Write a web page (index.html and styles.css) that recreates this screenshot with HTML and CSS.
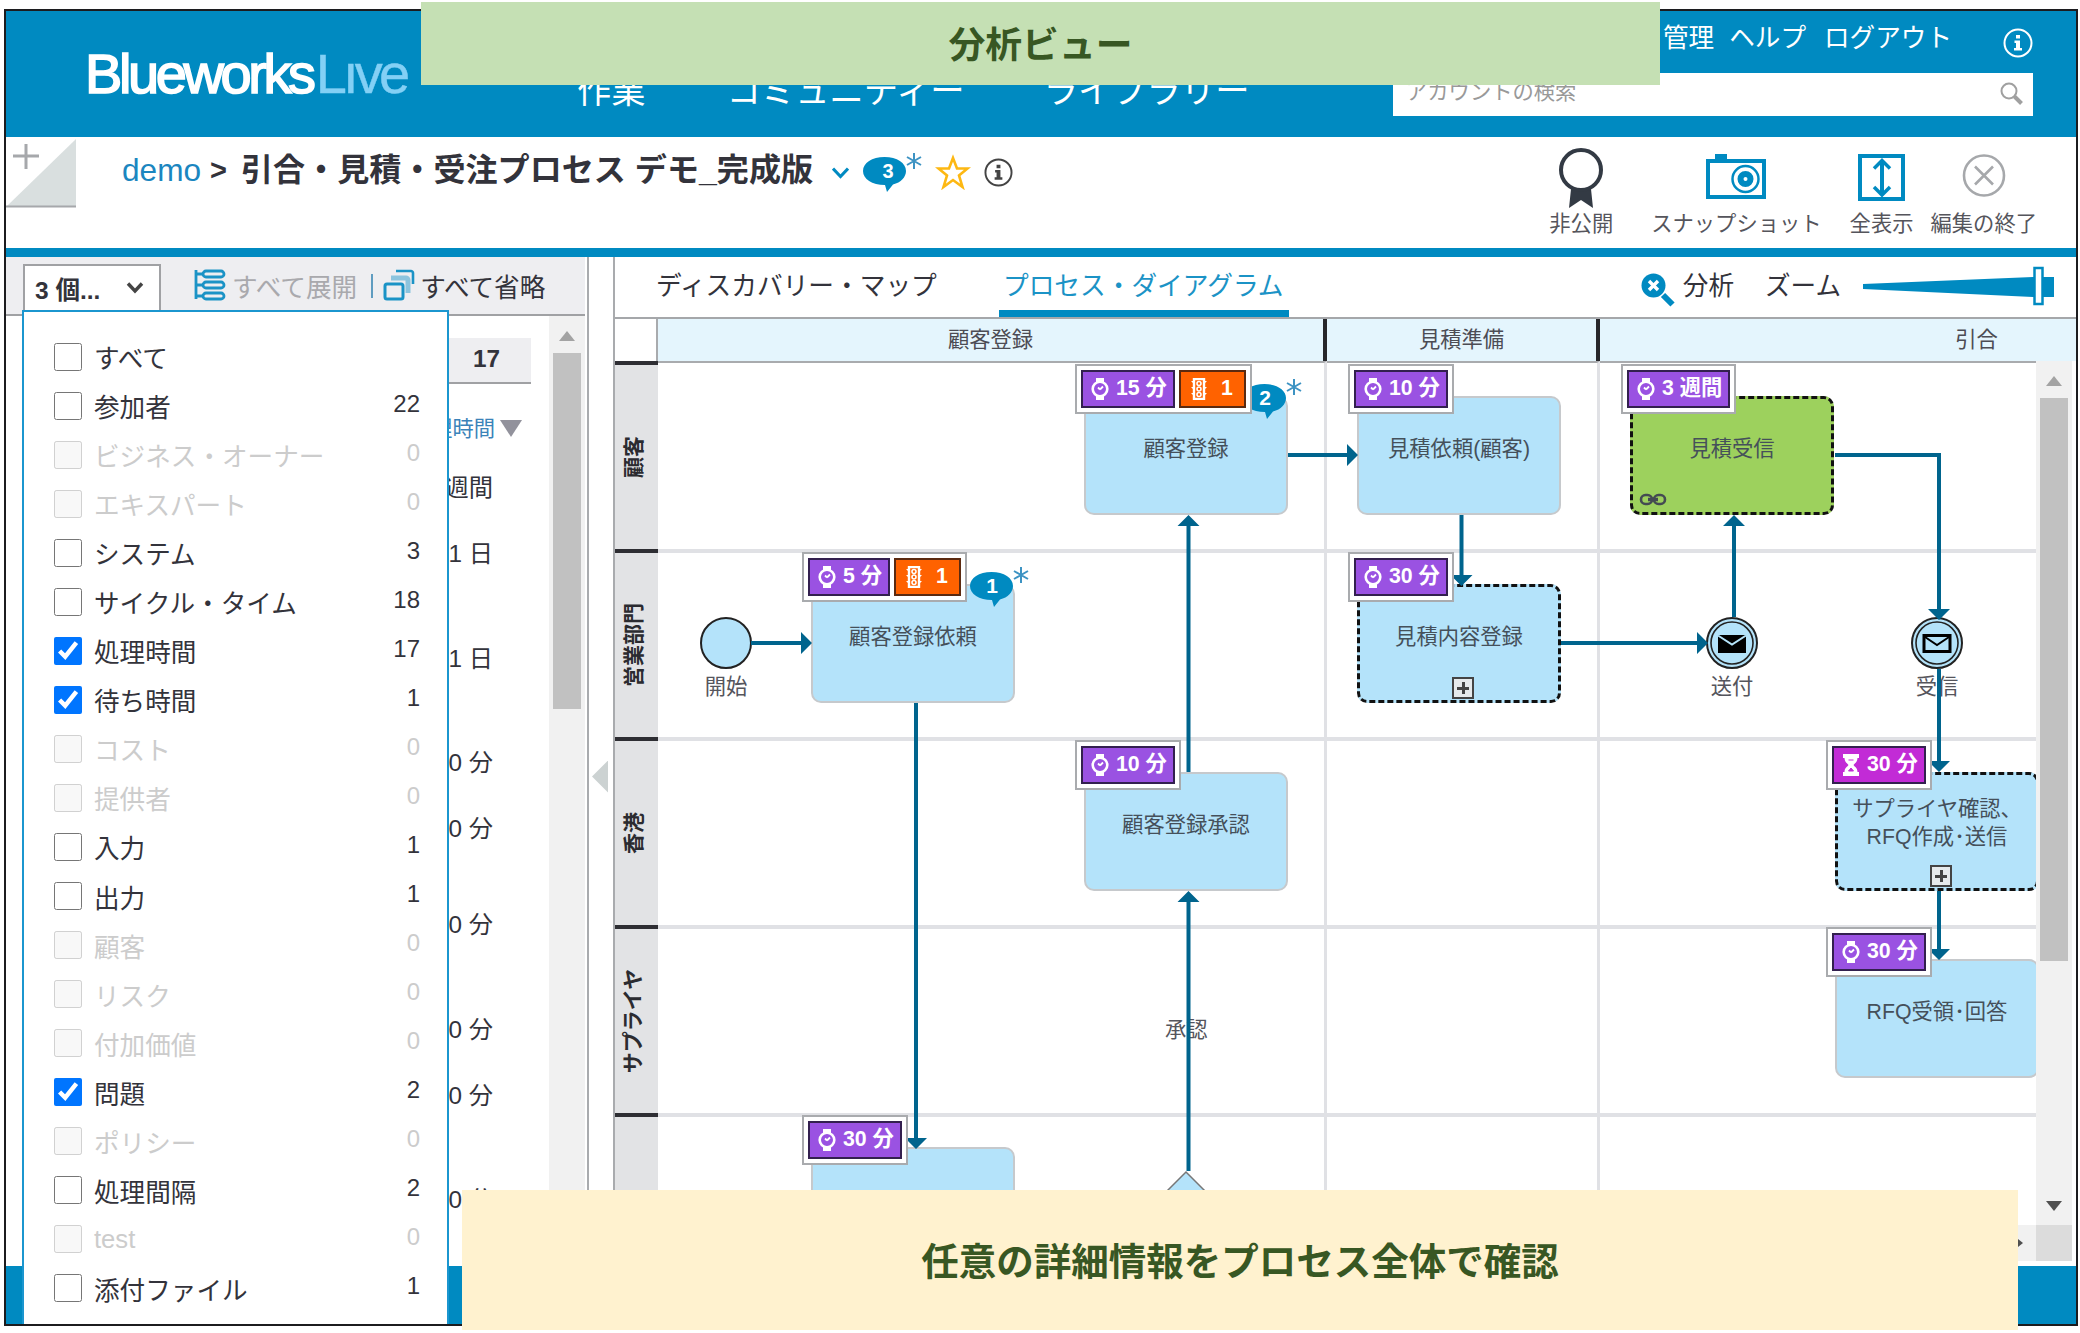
FILE: index.html
```html
<!DOCTYPE html>
<html lang="ja">
<head>
    <meta charset="UTF-8">
    <title>Blueworks Live</title>
    <link rel="stylesheet" href="styles.css">
</head>
<body>
    <!-- shared icons -->
    <svg class="defs" width="0" height="0">
        <symbol id="i-watch" viewBox="0 0 18 22">
            <path d="M5 0h8v4H5zM5 18h8v4H5z" fill="#fff"/>
            <circle cx="9" cy="11" r="7.300" fill="none" stroke="#fff" stroke-width="2.600"/>
            <path d="M9 11.500l3-3M7 9.500l2 2" stroke="#fff" stroke-width="1.800" fill="none"/>
        </symbol>
        <symbol id="i-glass" viewBox="0 0 18 22">
            <path d="M1 0h16v4h-1.500c0 4-2.500 5-4 7 1.500 2 4 3 4 7H17v4H1v-4h1.500c0-4 2.500-5 4-7-1.500-2-4-3-4-7H1z" fill="#fff"/>
            <path d="M6.500 6h5M9 14l2.500 3h-5z" stroke="#c22bd6" stroke-width="1" fill="#c22bd6"/>
        </symbol>
        <symbol id="i-light" viewBox="0 0 18 22">
            <path d="M4 1h10v20H4z" fill="none" stroke="#fff" stroke-width="2.400"/>
            <path d="M1 3h3v3zM1 9h3v3zM1 15h3v3zM17 3h-3v3zM17 9h-3v3zM17 15h-3v3z" fill="#fff"/>
            <circle cx="9" cy="5.500" r="2" fill="none" stroke="#fff" stroke-width="1.600"/>
            <circle cx="9" cy="11" r="2" fill="none" stroke="#fff" stroke-width="1.600"/>
            <circle cx="9" cy="16.500" r="2" fill="none" stroke="#fff" stroke-width="1.600"/>
        </symbol>
        <symbol id="i-bubble" viewBox="0 0 43 35">
            <path d="M21.500 0C34 0 43 6 43 14c0 6-5 11.500-13 13.500L24 35l-2-7C9 28 0 22 0 14S9 0 21.500 0z" fill="#008ac1"/>
        </symbol>
        <symbol id="i-star8" viewBox="0 0 16 16">
            <path d="M8 0v16M1 4l14 8M15 4L1 12" stroke="#3d93c3" stroke-width="2" fill="none"/>
        </symbol>
        <symbol id="i-info" viewBox="0 0 30 30">
            <circle cx="15" cy="15" r="13.500" fill="none" stroke="currentColor" stroke-width="2"/>
            <path d="M13 7h4v3.500h-4zM11.500 12.500H17V20h2v2.500h-8V20h2v-5h-1.500z" fill="currentColor"/>
        </symbol>
    </svg>

    <div class="window">
        <header class="header">
            <div class="logo"><span class="logo-main">Blueworks</span><span class="logo-live">Lıve</span></div>
            <nav class="nav">
                <a>作業</a>
                <a>コミュニティー</a>
                <a>ライブラリー</a>
            </nav>
            <div class="account">
                <div class="links">
                    <a>管理</a><a>ヘルプ</a><a>ログアウト</a>
                    <svg class="info" width="30" height="30"><use href="#i-info"/></svg>
                </div>
                <div class="search">
                    <span>アカウントの検索</span>
                    <svg width="24" height="24" viewBox="0 0 24 24" fill="none" stroke="#a0a0a0">
                        <circle cx="9" cy="9" r="7.500" stroke-width="2"/>
                        <path d="M14.500 14.500l7 7" stroke-width="4"/>
                    </svg>
                </div>
            </div>
        </header>

        <div class="titlebar">
            <svg class="corner" width="70" height="71" viewBox="0 0 70 71">
                <path d="M70 2v67H1z" fill="#d9dfdf"/>
                <path d="M0 69.500h70" stroke="#a6a8ab" stroke-width="2"/>
                <path d="M7 19h26M20 7v25" stroke="#a6a8ab" stroke-width="3"/>
            </svg>
            <div class="crumbs">
                <a class="space">demo</a>
                <b>&gt;</b>
                <h1>引合・見積・受注プロセス デモ_完成版</h1>
                <svg class="chev" width="17" height="12" viewBox="0 0 17 12"><path d="M1 1.500l7.500 8 7.500-8" fill="none" stroke="#008ac1" stroke-width="3"/></svg>
                <span class="bubble bubble-title"><svg width="43" height="35"><use href="#i-bubble"/></svg><b>3</b></span>
                <svg class="new" width="16" height="16"><use href="#i-star8"/></svg>
                <svg class="fav" width="36" height="36" viewBox="0 0 36 36"><path d="M18 4l4 10.500h10.500l-8.500 7 3.500 11.500-9.500-7-9.500 7L12 21.500l-8.500-7H14z" fill="none" stroke="#fdb813" stroke-width="2.600"/></svg>
                <svg class="dark" width="29" height="29"><use href="#i-info"/></svg>
            </div>
            <div class="actions">
                <div class="action">
                    <svg width="46" height="62" viewBox="0 0 46 62">
                        <path d="M13 42h20l2 19-12-8-12 8z" fill="#333a44"/>
                        <circle cx="23" cy="23" r="20" fill="#fff" stroke="#333a44" stroke-width="4"/>
                    </svg>
                    <span>非公開</span>
                </div>
                <div class="action snapshot">
                    <svg width="60" height="62" viewBox="0 0 60 62">
                        <path d="M9 12V7h12v5" fill="#008ac1"/>
                        <path d="M2 14h56v36H2z" fill="none" stroke="#008ac1" stroke-width="4"/>
                        <circle cx="39.500" cy="32" r="13" fill="none" stroke="#008ac1" stroke-width="2.500"/>
                        <circle cx="39.500" cy="32" r="5" fill="none" stroke="#008ac1" stroke-width="6"/>
                    </svg>
                    <span>スナップショット</span>
                </div>
                <div class="action full">
                    <svg width="48" height="62" viewBox="0 0 48 62" fill="none" stroke="#008ac1">
                        <path d="M2 9h43v43H2z" stroke-width="4"/>
                        <path d="M24 14v34" stroke-width="4"/>
                        <path d="M16 21.500l8-8 8 8M16 40l8 8 8-8" stroke-width="3.500"/>
                    </svg>
                    <span>全表示</span>
                </div>
                <div class="action close">
                    <svg width="44" height="62" viewBox="0 0 44 62" fill="none" stroke="#a6a8ab">
                        <circle cx="22" cy="28.500" r="20" stroke-width="2.600"/>
                        <path d="M13 19.500l18 18M31 19.500l-18 18" stroke-width="2.600"/>
                    </svg>
                    <span>編集の終了</span>
                </div>
            </div>
        </div>

        <main class="workspace">
            <section class="side">
                <div class="side-tools">
                    <div class="select">3 個...<svg width="18" height="12" viewBox="0 0 18 12"><path d="M2 1.500l7 7.500 7-7.500" fill="none" stroke="#444" stroke-width="3.400"/></svg></div>
                    <svg class="tree" width="32" height="32" viewBox="0 0 32 32" fill="none" stroke="#1b93c6" stroke-width="2.800">
                        <path d="M2 1v29M2 5h7M2 16h7M2 27h7"/>
                        <rect x="9" y="2" width="21" height="6" rx="3"/><rect x="9" y="13" width="21" height="6" rx="3"/><rect x="9" y="24" width="21" height="6" rx="3"/>
                    </svg>
                    <span class="expand">すべて展開</span>
                    <i class="sep"></i>
                    <svg class="stack" width="32" height="32" viewBox="0 0 32 32" fill="none" stroke="#1b93c6">
                        <rect x="2" y="15" width="18" height="15" rx="2" stroke-width="3"/>
                        <path d="M8 9h15c1 0 2 1 2 2v13" stroke="#8cc4de" stroke-width="5"/>
                        <path d="M13 2h15c1 0 2 1 2 2v11" stroke-width="2.600"/>
                    </svg>
                    <span>すべて省略</span>
                </div>
                <div class="side-body">
                    <div class="table">
                        <div class="total">17</div>
                        <div class="sort">処理時間<i></i></div>
                        <div class="row">3 週間</div>
                        <div class="row tall">1 日</div>
                        <div class="row tall">1 日</div>
                        <div class="row">30 分</div>
                        <div class="row mid">30 分</div>
                        <div class="row tall">30 分</div>
                        <div class="row">30 分</div>
                        <div class="row tall">10 分</div>
                        <div class="row">10 分</div>
                    </div>
                    <div class="vscroll side-scroll"><i class="up"></i><i class="thumb"></i></div>
                </div>
            </section>

            <div class="splitter"><i></i></div>

            <section class="diagram">
                <div class="tabs">
                    <a>ディスカバリー・マップ</a>
                    <a class="active">プロセス・ダイアグラム</a>
                    <div class="zoom">
                        <svg width="34" height="34" viewBox="0 0 34 34">
                            <circle cx="12.500" cy="12.500" r="12" fill="#008ac1"/>
                            <path d="M22 22l9.500 9.500" stroke="#008ac1" stroke-width="6"/>
                            <path d="M8 8l9 9M17 8l-9 9" stroke="#fff" stroke-width="3.400"/>
                        </svg>
                        <span class="analyze">分析</span>
                        <span class="zoom-label">ズーム</span>
                        <svg class="slider" width="194" height="40" viewBox="0 0 194 40">
                            <path d="M1 18L171 11h21v20h-21L1 23z" fill="#008ac1"/>
                            <rect x="172.500" y="2" width="8" height="36" fill="#fff" stroke="#008ac1" stroke-width="2.500"/>
                        </svg>
                    </div>
                </div>
                <div class="phases">
                    <div class="phase-corner"></div>
                    <div class="phase phase-1">顧客登録</div>
                    <div class="phase phase-2">見積準備</div>
                    <div class="phase phase-3">引合</div>
                </div>
                <div class="view">
                    <div class="canvas">
                        <div class="lane"><div class="lane-name"><span>顧客</span></div><div class="cell"></div><div class="cell"></div><div class="cell"></div></div>
                        <div class="lane"><div class="lane-name"><span>営業部門</span></div><div class="cell"></div><div class="cell"></div><div class="cell"></div></div>
                        <div class="lane"><div class="lane-name"><span>香港</span></div><div class="cell"></div><div class="cell"></div><div class="cell"></div></div>
                        <div class="lane"><div class="lane-name"><span>サプライヤ</span></div><div class="cell"></div><div class="cell"></div><div class="cell"></div></div>
                        <div class="lane"><div class="lane-name"></div><div class="cell"></div><div class="cell"></div><div class="cell"></div></div>

                        <div class="node col-2 row-1">顧客登録
                            <div class="badges"><span class="badge time"><svg><use href="#i-watch"/></svg>15 分</span><span class="badge issue"><svg><use href="#i-light"/></svg>1</span></div>
                            <span class="bubble bubble-node"><svg width="43" height="35"><use href="#i-bubble"/></svg><b>2</b></span>
                            <svg class="new node-new" width="16" height="16"><use href="#i-star8"/></svg>
                        </div>
                        <div class="node col-3 row-1">見積依頼(顧客)
                            <div class="badges"><span class="badge time"><svg><use href="#i-watch"/></svg>10 分</span></div>
                        </div>
                        <div class="node dashed linked col-4 row-1">見積受信
                            <div class="badges"><span class="badge time"><svg><use href="#i-watch"/></svg>3 週間</span></div>
                            <svg class="link" width="28" height="13" viewBox="0 0 28 13" fill="none" stroke="#444b52" stroke-width="2.600"><rect x="2" y="2" width="11" height="9" rx="4.500"/><rect x="15" y="2" width="11" height="9" rx="4.500"/><path d="M9 6.500h10" stroke-width="3.500"/></svg>
                        </div>
                        <div class="node col-1 row-2">顧客登録依頼
                            <div class="badges"><span class="badge time"><svg><use href="#i-watch"/></svg>5 分</span><span class="badge issue"><svg><use href="#i-light"/></svg>1</span></div>
                            <span class="bubble bubble-node"><svg width="43" height="35"><use href="#i-bubble"/></svg><b>1</b></span>
                            <svg class="new node-new" width="16" height="16"><use href="#i-star8"/></svg>
                        </div>
                        <div class="node dashed col-3 row-2">見積内容登録
                            <div class="badges"><span class="badge time"><svg><use href="#i-watch"/></svg>30 分</span></div>
                            <i class="plus"></i>
                        </div>
                        <div class="node col-2 row-3">顧客登録承認
                            <div class="badges"><span class="badge time"><svg><use href="#i-watch"/></svg>10 分</span></div>
                        </div>
                        <div class="node dashed two-line col-5 row-3">サプライヤ確認、<br>RFQ作成･送信
                            <div class="badges"><span class="badge wait"><svg><use href="#i-glass"/></svg>30 分</span></div>
                            <i class="plus"></i>
                        </div>
                        <div class="node col-5 row-4">RFQ受領･回答
                            <div class="badges"><span class="badge time"><svg><use href="#i-watch"/></svg>30 分</span></div>
                        </div>
                        <div class="node col-1 row-5">
                            <div class="badges"><span class="badge time"><svg><use href="#i-watch"/></svg>30 分</span></div>
                        </div>

                        <div class="event start"><svg width="52" height="52" viewBox="0 0 52 52"><circle cx="26" cy="26" r="25" fill="#b4e3fa" stroke="#222" stroke-width="2"/></svg><span>開始</span></div>
                        <div class="event send"><svg width="52" height="52" viewBox="0 0 52 52" stroke="#222" fill="#b4e3fa"><circle cx="26" cy="26" r="25" stroke-width="2"/><circle cx="26" cy="26" r="21" stroke-width="1.600"/><path d="M12 18h28v18H12z" fill="#000" stroke="none"/><path d="M12 18.500l14 9 14-9" fill="none" stroke="#b4e3fa" stroke-width="2"/></svg><span>送付</span></div>
                        <div class="event receive"><svg width="52" height="52" viewBox="0 0 52 52" stroke="#222" fill="#b4e3fa"><circle cx="26" cy="26" r="25" stroke-width="2"/><circle cx="26" cy="26" r="21" stroke-width="1.600"/><path d="M13 18.500h26v16H13z" stroke="#000" stroke-width="3"/><path d="M14 20l12 8 12-8" fill="none" stroke="#000" stroke-width="2"/></svg><span>受信</span></div>
                        <div class="flow-label">承認</div>

                        <svg class="flows" width="1421" height="864" viewBox="615 361 1421 864">
                            <path d="M1161 1197l25-25 25 25-25 25z" fill="#b4e3fa" stroke="#777" stroke-width="1.500"/>
                            <g fill="none" stroke="#00648d" stroke-width="4">
                                <path d="M751 643h54M916 703v440M1188.500 772V520M1188.500 1171V896M1288 455h64M1461.500 515v66M1561 643h140M1734 617v-98M1835 455h104v158M1939 669v98M1939 891v65"/>
                            </g>
                            <g fill="#00648d">
                                <path d="M801 632l11 11-11 11zM1347 444l11 11-11 11zM1697 632l11 11-11 11z"/>
                                <path d="M905 1138h22l-11 11zM1450.500 575h22l-11 11zM1928 609h22l-11 11zM1928 761h22l-11 11zM1928 949h22l-11 11z"/>
                                <path d="M1177.500 526h22l-11-11zM1177.500 902h22l-11-11zM1723 526h22l-11-11z"/>
                            </g>
                        </svg>
                    </div>
                    <div class="vscroll main-scroll"><i class="up"></i><i class="thumb"></i><i class="down"></i></div>
                </div>
                <div class="hscroll"><div class="track"><i></i></div><div class="grip"></div></div>
            </section>
        </main>
        <footer class="footer"></footer>
    </div>

    <div class="dropdown">
        <label><input type="checkbox">すべて<span></span></label>
        <label><input type="checkbox">参加者<span>22</span></label>
        <label class="off"><input type="checkbox" disabled>ビジネス・オーナー<span>0</span></label>
        <label class="off"><input type="checkbox" disabled>エキスパート<span>0</span></label>
        <label><input type="checkbox">システム<span>3</span></label>
        <label><input type="checkbox">サイクル・タイム<span>18</span></label>
        <label><input type="checkbox" checked>処理時間<span>17</span></label>
        <label><input type="checkbox" checked>待ち時間<span>1</span></label>
        <label class="off"><input type="checkbox" disabled>コスト<span>0</span></label>
        <label class="off"><input type="checkbox" disabled>提供者<span>0</span></label>
        <label><input type="checkbox">入力<span>1</span></label>
        <label><input type="checkbox">出力<span>1</span></label>
        <label class="off"><input type="checkbox" disabled>顧客<span>0</span></label>
        <label class="off"><input type="checkbox" disabled>リスク<span>0</span></label>
        <label class="off"><input type="checkbox" disabled>付加価値<span>0</span></label>
        <label><input type="checkbox" checked>問題<span>2</span></label>
        <label class="off"><input type="checkbox" disabled>ポリシー<span>0</span></label>
        <label><input type="checkbox">処理間隔<span>2</span></label>
        <label class="off"><input type="checkbox" disabled>test<span>0</span></label>
        <label><input type="checkbox">添付ファイル<span>1</span></label>
    </div>

    <div class="caption caption-top">分析ビュー</div>
    <div class="caption caption-bottom">任意の詳細情報をプロセス全体で確認</div>
</body>
</html>
```
FILE: styles.css
```css
* {
    box-sizing: border-box;
}
body {
    margin: 0;
    width: 2080px;
    height: 1333px;
    position: relative;
    overflow: hidden;
    background: #fff;
    color: #33333b;
    font-family: "Liberation Sans", "Noto Sans CJK JP", sans-serif;
    font-size: 25.6px;
    white-space: nowrap;
}
svg {
    display: block;
    flex: none;
}
.defs {
    position: absolute;
}
.window {
    position: absolute;
    left: 4px;
    top: 9px;
    width: 2074px;
    height: 1317px;
    border: 2px solid #1c1c1f;
    display: flex;
    flex-direction: column;
}

/* header */
.header {
    height: 126px;
    flex: none;
    background: #008ac1;
    color: #fff;
    display: flex;
}
.logo {
    width: 571px;
    padding: 30px 0 0 79px;
    font-size: 56px;
    line-height: 66px;
    letter-spacing: -3.4px;
}
.logo-main {
    -webkit-text-stroke: 1.6px #fff;
}
.logo-live {
    color: #83d0f5;
    margin-left: 3px;
    letter-spacing: -3.8px;
    -webkit-text-stroke: 0.4px #83d0f5;
}
.nav {
    width: 816px;
    display: flex;
    gap: 79px;
    padding-top: 60px;
    font-size: 34.3px;
    line-height: 40px;
}
.nav a:first-child {
    margin-right: 2px;
}
.account {
    width: 640px;
}
.links {
    display: flex;
    height: 62px;
    padding-left: 270px;
    line-height: 54px;
}
.links a {
    margin-right: 15px;
}
.links a:nth-child(2) {
    margin-right: 18px;
}
.links .info {
    margin: 17px 0 0 auto;
}
.search {
    height: 43px;
    padding: 0 9px 0 13px;
    background: #fff;
    color: #999;
    font-size: 21.3px;
    line-height: 39px;
    display: flex;
    justify-content: space-between;
}
.search svg {
    margin-top: 9px;
}

/* process title */
.titlebar {
    height: 111px;
    flex: none;
    display: flex;
}
.crumbs {
    display: flex;
    height: 66px;
    align-items: center;
    padding-left: 46px;
    font-size: 31.6px;
    line-height: 40px;
}
.space {
    color: #1b86c0;
}
.crumbs > b {
    margin: 0 14px 0 9px;
    font-size: 29px;
}
h1 {
    margin: 0;
    font-size: 32.1px;
}
.chev {
    margin: 5px 14px 0 19px;
}
.bubble b {
    position: absolute;
    left: 0;
    top: 0;
    width: 100%;
    text-align: center;
    color: #fff;
    font-size: 20px;
    line-height: 28px;
}
.bubble-title {
    position: relative;
    margin-top: 9px;
    padding: 0;
}
.bubble-title b {
    padding-left: 7px;
}
.crumbs .new {
    margin-top: -18px;
}
.fav {
    margin: 4px 13px 0 13px;
}
.dark {
    margin-top: 4px;
    color: #444;
}
.actions {
    display: flex;
    margin-left: auto;
    padding: 10px 39px 0 0;
}
.action {
    display: flex;
    flex-direction: column;
    align-items: center;
    font-size: 21.3px;
    line-height: 28px;
    color: #55555c;
}
.action svg {
    margin-bottom: 1px;
}
.snapshot {
    margin-left: 38px;
}
.full {
    margin-left: 28px;
}
.close {
    margin-left: 17px;
}

/* workspace */
.workspace {
    height: 1018px;
    flex: none;
    border-top: 9px solid #008ac1;
    display: flex;
}
.footer {
    flex: 1;
    background: #008ac1;
}
.side {
    width: 583px;
    border-right: 2px solid #a9abae;
    display: flex;
    flex-direction: column;
}
.side-tools {
    width: 579px;
    height: 59px;
    flex: none;
    background: #eeeef1;
    border-bottom: 2px solid #a0a1a4;
    display: flex;
    align-items: center;
    padding: 0 0 0 17px;
}
.select {
    width: 138px;
    height: 50px;
    margin-top: 7px;
    border: 2px solid #a0a1a4;
    border-bottom: 0;
    background: #fff;
    display: flex;
    align-items: center;
    justify-content: space-between;
    padding: 0 15px 4px 10px;
    font-weight: bold;
    font-size: 24.5px;
}
.tree {
    margin: -2px 6px 0 33px;
}
.expand {
    color: #a9a9ad;
}
.sep {
    width: 2px;
    height: 24px;
    margin: 0 10px 0 14px;
    background: #5f9cc0;
}
.stack {
    margin: -2px 5px 0 0;
}
.side-body {
    flex: 1;
    display: flex;
    width: 579px;
    overflow: hidden;
}
.table {
    flex: 1;
    padding: 22px 18px 0 330px;
    text-align: right;
    font-size: 24.3px;
}
.total {
    height: 46px;
    padding-right: 31px;
    background: #eeeef1;
    border-bottom: 2px solid #a0a1a4;
    font-weight: bold;
    line-height: 42px;
}
.sort {
    height: 89px;
    padding-top: 30px;
    color: #3b83b9;
    font-size: 21.3px;
    line-height: 30px;
    display: flex;
    justify-content: flex-end;
    gap: 5px;
    padding-right: 9px;
}
.sort i {
    width: 22px;
    height: 17px;
    margin-top: 6px;
    background: #92929c;
    clip-path: polygon(0 0, 100% 0, 50% 100%);
}
.row {
    height: 66px;
    padding-right: 38px;
    line-height: 30px;
}
.row.mid {
    height: 96px;
}
.row.tall {
    height: 104.5px;
}
.vscroll {
    position: relative;
    width: 36px;
    flex: none;
    background: #f1f1f1;
    display: flex;
    flex-direction: column;
    align-items: center;
}
.vscroll .thumb {
    width: 28px;
    background: #c1c1c1;
}
.up, .down {
    width: 16px;
    height: 10px;
    background: #a3a3a3;
    clip-path: polygon(50% 0, 100% 100%, 0 100%);
}
.down {
    background: #505050;
    clip-path: polygon(0 0, 100% 0, 50% 100%);
}
.side-scroll .up {
    margin: 15px 0 12px;
}
.side-scroll .thumb {
    height: 356px;
}
.splitter {
    width: 24px;
    display: flex;
    align-items: center;
}
.splitter i {
    width: 16px;
    height: 32px;
    margin: 30px 0 0 3px;
    background: #ccd2d2;
    clip-path: polygon(100% 0, 100% 100%, 0 50%);
}

/* diagram */
.diagram {
    flex: 1;
    min-width: 0;
    border-left: 2px solid #a9abae;
    display: flex;
    flex-direction: column;
}
.tabs {
    height: 62px;
    flex: none;
    border-bottom: 2px solid #a5a7aa;
    display: flex;
    padding-left: 41px;
    line-height: 58px;
}
.tabs .active {
    margin-left: 58px;
    padding: 0 4px;
    color: #1b93c6;
    border-bottom: 7px solid #008ac1;
    width: 290px;
}
.tabs > a {
    font-size: 25.7px;
}
.tabs > a:first-child {
    width: 285px;
}
.zoom {
    display: flex;
    margin-left: auto;
    padding-right: 20px;
}
.zoom > svg:first-child {
    margin: 16px 8px 0 0;
}
.analyze {
    margin-right: 31px;
}
.zoom-label {
    margin-right: 21px;
}
.slider {
    margin-top: 9px;
}
.phases {
    height: 42px;
    flex: none;
    display: flex;
    overflow: hidden;
    background: #e4f5fd;
    color: #4c4c54;
    font-size: 21.3px;
    line-height: 43px;
    text-align: center;
}
.phase-corner {
    width: 43px;
    flex: none;
    background: #fff;
    border-right: 2px solid #a9abae;
}
.phase {
    flex: none;
}
.phase-1 {
    width: 669px;
    border-right: 4px solid #26262a;
}
.phase-2 {
    width: 273px;
    border-right: 4px solid #26262a;
}
.phase-3 {
    width: 753px;
}
.view {
    height: 864px;
    display: flex;
}
.canvas {
    position: relative;
    width: 1421px;
    overflow: hidden;
}
.lane {
    height: 188px;
    display: grid;
    grid-template-columns: 43px 669px 273px 1fr;
}
.lane-name {
    border-top: 4px solid #2e2e33;
    background: #e2e3e5;
    display: flex;
    align-items: center;
    justify-content: center;
    padding-right: 10px;
    font-size: 21px;
    font-weight: bold;
    color: #2b2b30;
}
.lane-name span {
    transform: rotate(-90deg);
    flex: none;
}
.cell {
    border-top: 4px solid #e0e1e5;
    border-right: 3px solid #e0e1e5;
}
.cell:last-child {
    border-right: 0;
}
.lane:first-child .cell {
    border-top: 2px solid #a9abae;
}
.node {
    position: absolute;
    width: 204px;
    height: 119px;
    padding-top: 36px;
    border: 2px solid #c6c9cc;
    border-radius: 10px;
    background: #b4e3fa;
    color: #45505a;
    font-size: 21.3px;
    line-height: 30px;
    text-align: center;
}
.dashed {
    border: 3px dashed #111;
    padding-top: 35px;
}
.linked {
    background: #9dd15d;
}
.two-line {
    padding-top: 20px;
    line-height: 28px;
}
.col-1 { left: 196px; }
.col-2 { left: 469px; }
.col-3 { left: 742px; }
.col-4 { left: 1015px; }
.col-5 { left: 1220px; }
.row-1 { top: 35px; }
.row-2 { top: 223px; }
.row-3 { top: 411px; }
.row-4 { top: 598px; }
.row-5 { top: 786px; }
.badges {
    position: absolute;
    z-index: 3;
    left: -11px;
    top: -34px;
    height: 50px;
    padding: 4px;
    border: 2px solid #a9abae;
    background: #fff;
    display: flex;
    gap: 4px;
}
.dashed .badges {
    left: -12px;
    top: -35px;
}
.badge {
    height: 38px;
    padding: 0 6px 0 8px;
    border: 2px solid #33204f;
    color: #fff;
    font-size: 21.3px;
    font-weight: bold;
    line-height: 32px;
    display: flex;
}
.badge svg {
    width: 18px;
    height: 22px;
    margin: 6px 7px 0 0;
}
.time { background: #9a52e2; }
.wait { background: #c22bd6; }
.issue {
    background: #ff6200;
    border-color: #5b2a10;
    padding: 0 11px 0 9px;
}
.issue svg {
    margin-right: 13px;
}
.bubble-node {
    position: absolute;
    right: 0;
    top: -14px;
    height: 35px;
}
.node .bubble b {
    font-size: 21px;
    line-height: 28px;
    padding-left: 1px;
}
.node-new {
    position: absolute;
    right: -16px;
    top: -19px;
}
.link {
    position: absolute;
    left: 6px;
    bottom: 6px;
}
.plus {
    position: absolute;
    left: 92px;
    bottom: 1px;
    width: 22px;
    height: 22px;
    border: 2px solid #444;
    background:
        linear-gradient(#444, #444) center / 12px 3px no-repeat,
        linear-gradient(#444, #444) center / 3px 12px no-repeat,
        #e6eaec;
}
.event {
    position: absolute;
    top: 256px;
    width: 52px;
    font-size: 21.3px;
    line-height: 30px;
    color: #55555c;
    display: flex;
    flex-direction: column;
    align-items: center;
    gap: 3px;
}
.start { left: 85px; }
.send { left: 1091px; }
.receive { left: 1296px; }
.flow-label {
    position: absolute;
    left: 550px;
    top: 654px;
    font-size: 21.3px;
    line-height: 30px;
    color: #55555c;
}
.flows {
    position: absolute;
    z-index: 2;
    left: 0;
    top: 0;
}
.main-scroll .up {
    margin: 15px 0 12px;
}
.main-scroll .thumb {
    height: 563px;
}
.main-scroll .down {
    margin: auto 0 14px;
}
.hscroll {
    height: 36px;
    display: flex;
}
.track {
    width: 1421px;
    background: #f1f1f1;
    display: flex;
    align-items: center;
    justify-content: flex-end;
    padding-right: 13px;
}
.track i {
    width: 10px;
    height: 16px;
    background: #505050;
    clip-path: polygon(0 0, 100% 50%, 0 100%);
}
.grip {
    width: 36px;
    background: #dcdcdc;
}

/* open filter menu, over the side panel */
.dropdown {
    position: absolute;
    left: 22px;
    top: 310px;
    width: 427px;
    height: 1014px;
    padding: 20px 27px 0 30px;
    border: 2px solid #1b96cf;
    border-bottom: 0;
    background: #fff;
}
.dropdown label {
    height: 49.05px;
    display: flex;
    align-items: center;
}
.dropdown input {
    width: 28px;
    height: 28px;
    margin: 0 12px 0 0;
}
.dropdown span {
    margin-left: auto;
    padding-bottom: 4px;
    font-size: 24px;
}
.off {
    color: #ccc;
}

/* slide captions laid over the window */
.caption {
    position: absolute;
    z-index: 5;
    display: flex;
    align-items: center;
    justify-content: center;
    color: #385723;
    font-size: 37.5px;
    font-weight: bold;
}
.caption-top {
    left: 421px;
    top: 2px;
    width: 1239px;
    height: 83px;
    padding-bottom: 3px;
    font-size: 36.8px;
    background: #c5e0b4;
}
.caption-bottom {
    left: 462px;
    top: 1190px;
    width: 1556px;
    height: 140px;
    padding-bottom: 4px;
    background: #fff2cf;
}
```
